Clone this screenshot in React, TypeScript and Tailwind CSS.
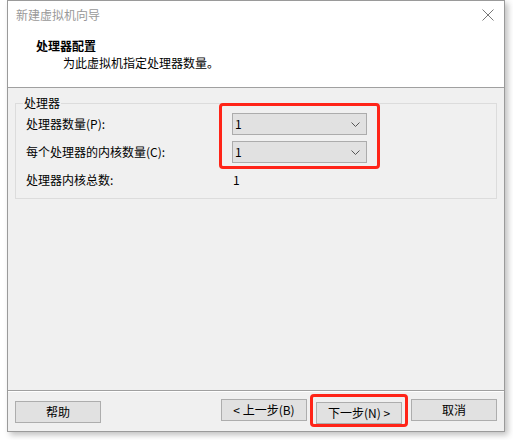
import React from 'react';

const font = { fontFamily: '"Noto Sans CJK SC", "Noto Sans", sans-serif' };

function ComboBox({ value }: { value: string }) {
  return <div className="flex items-center justify-between w-[135px] h-[22px] border border-[#acacac] bg-[#e1e1e1] pl-[2px] pr-[5px] text-[12px] text-black">
      <span>{value}</span>
      <svg width="9" height="5" viewBox="0 0 9 5" className="mr-[1px]">
        <path d="M0.5 0.5 L4.5 4.5 L8.5 0.5" fill="none" stroke="#555" strokeWidth="1" />
      </svg>
    </div>;
}

function Button({ children }: { children: React.ReactNode }) {
  return <button className="w-[86px] h-[22px] border border-[#adadad] bg-[#e1e1e1] text-[12px] leading-none text-black">
      {children}
    </button>;
}

export default function App() {
  return <div className="w-[513px] h-[440px] bg-white overflow-hidden" style={font}>
      <div className="ml-[7px] w-[498px] h-[432px] border border-[#9a9a9a] bg-[#f0f0f0] flex flex-col shadow-[3px_3px_6px_rgba(0,0,0,0.25)]">
        {/* Header */}
        <div className="h-[87px] bg-white border-b border-[#a0a0a0] flex flex-col shrink-0">
          <div className="h-[28px] flex items-center justify-between pl-[8px] pr-[10px]">
            <span className="text-[12px] text-[#999]">新建虚拟机向导</span>
            <svg width="12" height="12" viewBox="0 0 12 12">
              <path d="M0.5 0.5 L11.5 11.5 M11.5 0.5 L0.5 11.5" stroke="#777" strokeWidth="1" />
            </svg>
          </div>
          <div className="mt-[9px] pl-[28px] text-[12px] leading-[16px] font-bold text-black">处理器配置</div>
          <div className="mt-[1px] pl-[55px] text-[12px] leading-[16px] text-black">为此虚拟机指定处理器数量。</div>
        </div>

        {/* Body */}
        <div className="flex-1 px-[7px] pt-[7px]">
          <fieldset className="border border-[#dcdcdc] pl-[10px] pb-[7px] pt-[2px]">
            <legend className="ml-[-3px] px-[1px] text-[12px] leading-[16px] text-black">处理器</legend>
            <div className="flex text-[12px] text-black">
              <div className="w-[206px] flex flex-col gap-[6px]">
                <div className="h-[22px] flex items-center">处理器数量(P):</div>
                <div className="h-[22px] flex items-center">每个处理器的内核数量(C):</div>
                <div className="h-[22px] flex items-center">处理器内核总数:</div>
              </div>
              <div className="flex flex-col gap-[6px]">
                <div className="relative flex flex-col gap-[6px]">
                  <ComboBox value="1" />
                  <ComboBox value="1" />
                  <div className="absolute left-[-13px] right-[-13px] top-[-10px] bottom-[-6px] border-[3px] border-[#ff2418] rounded-[4px]" />
                </div>
                <div className="h-[22px] flex items-center pl-[1px]">1</div>
              </div>
            </div>
          </fieldset>
        </div>

        {/* Footer */}
        <div className="shrink-0">
          <div className="h-px bg-[#a0a0a0]" />
          <div className="h-px bg-white" />
          <div className="flex items-center px-[7px] pt-[7px] pb-[7px]">
            <Button>帮助</Button>
            <div className="flex-1" />
            <div className="flex gap-[9px]">
              <Button>&lt; 上一步(B)</Button>
              <div className="relative">
                <Button>下一步(N) &gt;</Button>
                <div className="absolute left-[-6px] right-[-6px] top-[-5px] bottom-[-3px] border-[3px] border-[#ff2418] rounded-[4px]" />
              </div>
              <Button>取消</Button>
            </div>
          </div>
        </div>
      </div>
    </div>;
}
